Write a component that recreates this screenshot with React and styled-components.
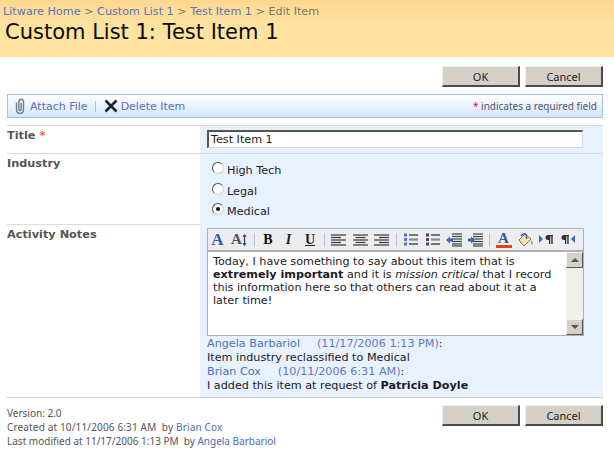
import styled, { createGlobalStyle } from 'styled-components'

const Global = createGlobalStyle`
  html, body { margin: 0; padding: 0; background: #fff; }
  body { font-family: "DejaVu Sans", Verdana, sans-serif; font-size: 11px; color: #1a1a2a; overflow: hidden; }
`

const Page = styled.div`
  width: 614px;
  height: 450px;
  overflow: hidden;
`

const Header = styled.div`
  height: 57px;
  box-sizing: border-box;
  padding: 5px 5px 0 3px;
  background: linear-gradient(#fcd88e, #fee2a0 40%, #fee3a1);
`

const Breadcrumb = styled.div`
  font-size: 11.2px;
  line-height: 14px;
  color: #7d7468;
  a { color: #5f70bb; }
`

const PageTitle = styled.h1`
  margin: 0 0 0 2px;
  font-size: 21px;
  line-height: 26px;
  font-weight: 400;
  color: #0a0a0a;
  font-family: "DejaVu Sans", sans-serif;
`

const ButtonRow = styled.div`
  display: flex;
  justify-content: flex-end;
  gap: 5px;
  padding: ${p => p.$padding};
`

const Button = styled.div`
  width: ${p => p.$width}px;
  height: 21px;
  box-sizing: border-box;
  background: #d4d0c8;
  border-top: 1px solid #f4f2ee;
  border-left: 1px solid #f4f2ee;
  border-right: 2px solid #4a4a46;
  border-bottom: 2px solid #4a4a46;
  display: flex;
  align-items: center;
  justify-content: center;
  font-family: "Noto Sans", sans-serif;
  font-size: 11px;
  color: #222;
`

const Toolbar = styled.div`
  margin: 7px 11px 0 7px;
  height: 24px;
  box-sizing: border-box;
  border: 1px solid #9dc0f2;
  background: linear-gradient(#fdfeff, #d5e6fd);
  display: flex;
  align-items: center;
  padding: 0 5px 0 5px;
  color: #5f70bb;
  font-size: 11px;
`

const ToolLink = styled.span`
  display: flex;
  align-items: center;
  gap: 3px;
`

const ToolSep = styled.span`
  width: 1px;
  height: 11px;
  background: #a8bedf;
  margin: 0 8px 0 7px;
`

const Required = styled.span`
  margin-left: auto;
  font-family: "Noto Sans", sans-serif;
  font-size: 10px;
  color: #55556a;
  i { color: #e0203a; font-style: normal; }
`

const Form = styled.div`
  margin: 7px 11px 0 7px;
  border-top: 1px solid #dcdcdc;
  border-bottom: 1px solid #cfcfcf;
`

const Row = styled.div`
  display: grid;
  grid-template-columns: 193px 1fr;
  height: ${p => p.$height}px;
  & + & { border-top: 1px solid #d8dce2; }
`

const Label = styled.div`
  font-weight: 700;
  font-size: 11.3px;
  line-height: 13px;
  color: #555;
  padding-top: 3px;
  em { color: #f0662a; font-style: normal; }
`

const Field = styled.div`
  background: #e8f1fe;
  padding: ${p => p.$padding};
`

const TextInput = styled.div`
  width: 376px;
  height: 18px;
  box-sizing: border-box;
  background: #fff;
  border-top: 2px solid #555;
  border-left: 2px solid #555;
  border-right: 1px solid #dcd8d0;
  border-bottom: 1px solid #dcd8d0;
  padding-left: 2px;
  line-height: 15px;
  font-size: 11.2px;
  color: #222;
`

const RadioRow = styled.div`
  display: flex;
  align-items: flex-start;
  height: 20.5px;
  gap: 3px;
  font-size: 11.2px;
  line-height: 15px;
`

const RadioDot = styled.span`
  width: 12px;
  height: 12px;
  margin-top: -1px;
  box-sizing: border-box;
  border-radius: 50%;
  border: 1px solid #555;
  border-right-color: #d0d0d0;
  border-bottom-color: #d0d0d0;
  background: #fff;
  display: flex;
  align-items: center;
  justify-content: center;
  &::after {
    content: "";
    width: 4px;
    height: 4px;
    border-radius: 50%;
    background: ${p => (p.$on ? '#111' : 'transparent')};
  }
`

const Editor = styled.div`
  width: 377px;
  box-sizing: border-box;
  border: 1px solid #aeb0b2;
`

const EditorBar = styled.div`
  height: 23px;
  box-sizing: border-box;
  background: #ecedf0;
  border-bottom: 2px solid #aeb0b2;
  display: flex;
  align-items: center;
`

const Cell = styled.span`
  width: ${p => p.$w || 21}px;
  flex: none;
  display: flex;
  align-items: center;
  justify-content: center;
  font-family: "Liberation Serif", serif;
  font-size: ${p => p.$size || 14}px;
  font-weight: 700;
  font-style: ${p => (p.$italic ? 'italic' : 'normal')};
  text-decoration: ${p => (p.$under ? 'underline' : 'none')};
  color: ${p => p.$color || '#222'};
`

const BarSep = styled.span`
  width: 1px;
  height: 14px;
  margin: 0 3px;
  flex: none;
  background: #b4c6e4;
`

const EditorBody = styled.div`
  display: flex;
  height: 83px;
  background: #fff;
`

const EditorText = styled.div`
  flex: 1;
  padding: 3px 10px 0 5px;
  font-size: 11.2px;
  line-height: 13.1px;
  color: #1a1a2a;
`

const Scrollbar = styled.div`
  width: 17px;
  background: #f0efea;
  display: flex;
  flex-direction: column;
  justify-content: space-between;
`

const ScrollButton = styled.div`
  height: 16px;
  box-sizing: border-box;
  background: #d4d0c8;
  border-top: 1px solid #f4f2ee;
  border-left: 1px solid #f4f2ee;
  border-right: 1px solid #555;
  border-bottom: 1px solid #555;
  display: flex;
  align-items: center;
  justify-content: center;
  &::after {
    content: "";
    border-left: 4px solid transparent;
    border-right: 4px solid transparent;
    ${p => (p.$down ? 'border-top: 4px solid #555;' : 'border-bottom: 4px solid #555;')}
  }
`

const History = styled.div`
  margin-top: 1px;
  font-size: 11.2px;
  line-height: 14px;
  a { color: #4f72b8; }
`

const Stamp = styled.span`
  margin-left: 17px;
  color: #6678c0;
  span { color: #1a1a2a; }
`

const Footer = styled.div`
  display: flex;
  justify-content: space-between;
  margin: 0 11px 0 7px;
`

const Meta = styled.div`
  padding-top: 8px;
  font-family: "Noto Sans", sans-serif;
  font-size: 10px;
  line-height: 14px;
  color: #555;
  a { color: #4f6cb8; }
`

const MetaLine = styled.div`
  letter-spacing: ${p => p.$track || 0}px;
`

const Clip = () => (
  <svg width="14" height="16" viewBox="0 0 14 16" fill="none" stroke="#737a8a" strokeWidth="1.4">
    <path d="M3.500 4.500v7.500a3.500 3.500 0 0 0 7 0V3.500a2.300 2.300 0 0 0-4.600 0V11.500a1.100 1.100 0 0 0 2.200 0V5" />
  </svg>
)

const Cross = () => (
  <svg width="14" height="14" viewBox="0 0 14 14" stroke="#222" strokeWidth="2.6">
    <path d="M1.500 1.500l11 11M12.500 1.500l-11 11" />
  </svg>
)

const Lines = ({ align }) => (
  <svg width="15" height="12" viewBox="0 0 15 12" stroke="#444" strokeWidth="1.300">
    {[15, 10, 15, 10, 15].map((w, i) => {
      const x = align === 'left' ? 0 : align === 'right' ? 15 - w : (15 - w) / 2
      return <path key={i} d={`M${x} ${1 + i * 2.500}h${w}`} />
    })}
  </svg>
)

const ListIcon = ({ numbered }) => (
  <svg width="14" height="13" viewBox="0 0 14 13">
    {[2, 6.500, 11].map(y => (
      <g key={y}>
        <rect x="0" y={y - 1.500} width="3" height="3" fill={numbered ? '#4a78c0' : '#3a4a60'} />
        <path d={`M5 ${y - 0.500}h9M5 ${y + 0.500}h9`} stroke="#555" strokeWidth="0.800" />
      </g>
    ))}
  </svg>
)

const IndentIcon = ({ out }) => (
  <svg width="16" height="14" viewBox="0 0 16 14">
    {[1, 3.500, 6, 8.500, 11, 13].map(y => <path key={y} d={`M6 ${y}h10`} stroke="#444" strokeWidth="1.200" />)}
    <path d={out ? 'M0 7l4-3.500v2h3v3H4v2z' : 'M8 7L4 3.500v2H1v3h3v2z'} fill="#3a66b0" />
  </svg>
)

const ShrinkArrow = () => (
  <svg width="5" height="12" viewBox="0 0 5 13" fill="#444">
    <path d="M2.500 0L5 3H3.200v7H5l-2.500 3L0 10h1.800V3H0z" />
  </svg>
)

const BucketIcon = () => (
  <svg width="17" height="16" viewBox="0 0 17 16">
    <path d="M2 8l6-6 6 5-7 7z" fill="#f3e2b0" stroke="#8a7448" />
    <path d="M4 4c2-3 5-3 5.500 0v3" fill="none" stroke="#3a66b0" strokeWidth="1.500" />
    <path d="M14 8c1.500 2 2.500 3.500 1.500 4.500S13 11 14 8z" fill="#d8962e" />
  </svg>
)

const ParaIcon = ({ rtl }) => (
  <svg width="15" height="11" viewBox="0 0 15 11">
    <path d={rtl ? 'M15 1v8l-4-4z' : 'M0 1v8l4-4z'} fill="#3a66b0" />
    <g transform={rtl ? 'translate(0 0)' : 'translate(5 0)'}>
      <path d="M9 1H4a2.500 2.500 0 0 0 0 5h1v4h1.300V2.200h1V10H8.700V2.200H9z" fill="#333" />
    </g>
  </svg>
)

const ColorA = styled.span`
  width: 16px;
  height: 17px;
  box-sizing: border-box;
  border-bottom: 3px solid #e8400c;
  font-family: "Liberation Serif", serif;
  font-size: 15px;
  line-height: 14px;
  font-weight: 700;
  text-align: center;
  color: #2f5ba8;
`

const Actions = ({ padding }) => (
  <ButtonRow $padding={padding}>
    <Button $width={78}>OK</Button>
    <Button $width={78}>Cancel</Button>
  </ButtonRow>
)

const App = () => (
  <Page>
    <Global />
    <Header>
      <Breadcrumb>
        <a>Litware Home</a> &gt; <a>Custom List 1</a> &gt; <a>Test Item 1</a> &gt; Edit Item
      </Breadcrumb>
      <PageTitle>Custom List 1: Test Item 1</PageTitle>
    </Header>
    <Actions padding="9px 11px 0 0" />
    <Toolbar>
      <ToolLink><Clip />Attach File</ToolLink>
      <ToolSep />
      <ToolLink><Cross />Delete Item</ToolLink>
      <Required><i>*</i> indicates a required field</Required>
    </Toolbar>
    <Form>
      <Row $height={27}>
        <Label>Title <em>*</em></Label>
        <Field $padding="4px 0 0 7px"><TextInput>Test Item 1</TextInput></Field>
      </Row>
      <Row $height={70}>
        <Label>Industry</Label>
        <Field $padding="9px 0 0 12px">
          <RadioRow><RadioDot />High Tech</RadioRow>
          <RadioRow><RadioDot />Legal</RadioRow>
          <RadioRow><RadioDot $on />Medical</RadioRow>
        </Field>
      </Row>
      <Row $height={172}>
        <Label>Activity Notes</Label>
        <Field $padding="3px 0 0 7px">
          <Editor>
            <EditorBar>
              <Cell $size={17} $w={19} $color="#2f5ba8">A</Cell>
              <Cell $size={15} $w={24} $color="#555">A<ShrinkArrow /></Cell>
              <BarSep />
              <Cell $w={20} $color="#111">B</Cell>
              <Cell $w={21} $italic>I</Cell>
              <Cell $w={22} $under>U</Cell>
              <BarSep />
              <Cell $w={21.500}><Lines align="left" /></Cell>
              <Cell $w={21.500}><Lines align="center" /></Cell>
              <Cell $w={21.500}><Lines align="right" /></Cell>
              <BarSep />
              <Cell $w={22}><ListIcon numbered /></Cell>
              <Cell $w={22}><ListIcon /></Cell>
              <Cell><IndentIcon out /></Cell>
              <Cell><IndentIcon /></Cell>
              <BarSep />
              <Cell $w={22}><ColorA>A</ColorA></Cell>
              <Cell><BucketIcon /></Cell>
              <Cell $w={21.500}><ParaIcon /></Cell>
              <Cell $w={21.500}><ParaIcon rtl /></Cell>
            </EditorBar>
            <EditorBody>
              <EditorText>
                <div>Today, I have something to say about this item that is</div>
                <div><b>extremely important</b> and it is <i>mission critical</i> that I record</div>
                <div>this information here so that others can read about it at a</div>
                <div>later time!</div>
              </EditorText>
              <Scrollbar>
                <ScrollButton />
                <ScrollButton $down />
              </Scrollbar>
            </EditorBody>
          </Editor>
          <History>
            <div><a>Angela Barbariol</a><Stamp>(11/17/2006 1:13 PM)<span>:</span></Stamp></div>
            <div>Item industry reclassified to Medical</div>
            <div><a>Brian Cox</a><Stamp>(10/11/2006 6:31 AM)<span>:</span></Stamp></div>
            <div>I added this item at request of <b>Patricia Doyle</b></div>
          </History>
        </Field>
      </Row>
    </Form>
    <Footer>
      <Meta>
        <MetaLine>Version: 2.0</MetaLine>
        <MetaLine $track={0.15}>Created at 10/11/2006 6:31 AM&nbsp; by <a>Brian Cox</a></MetaLine>
        <MetaLine>Last modified at 11/17/2006 1:13 PM&nbsp; by <a>Angela Barbariol</a></MetaLine>
      </Meta>
      <Actions padding="7px 0 0 0" />
    </Footer>
  </Page>
)

export default App
